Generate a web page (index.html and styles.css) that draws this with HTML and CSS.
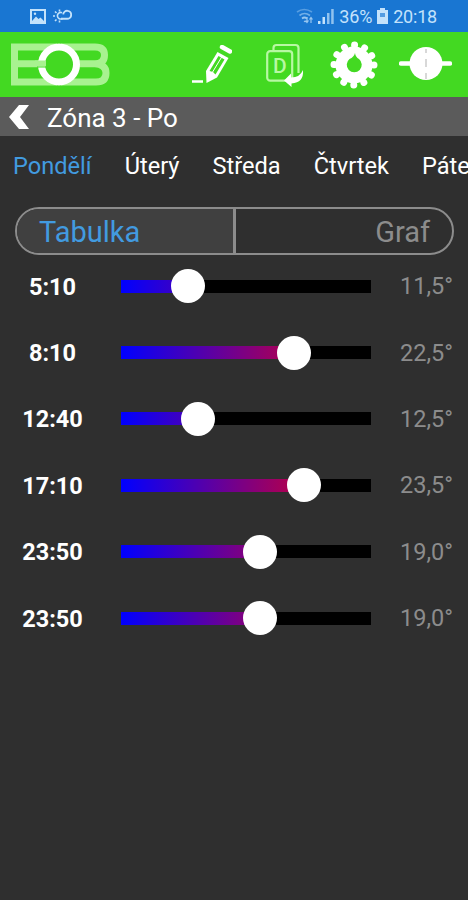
FILE: index.html
```
<!DOCTYPE html>
<html lang="cs">
<head>
    <meta charset="UTF-8">
    <meta name="viewport" content="width=device-width, initial-scale=1.0">
    <title>Zóna 3 - Po</title>
    <link rel="stylesheet" href="styles.css">
</head>
<body>
    <div class="status-bar">
        <div class="status-left">
            <svg width="16" height="15" viewBox="0 0 16 15">
                <rect x="1" y="1" width="14" height="13" fill="none" stroke="currentColor" stroke-width="2"/>
                <path d="M2 12 L6 7.500 L8.500 10 L10.500 8.500 L14 12 V13 H2 Z" fill="currentColor"/>
                <circle cx="5" cy="4.800" r="1.200" fill="currentColor"/>
            </svg>
            <svg width="19" height="15" viewBox="0 0 19 15" fill="none" stroke="currentColor" stroke-width="1.600">
                <path d="M9 3.700 A3.300 3.300 0 1 0 9.500 9.500"/>
                <path d="M0 7 H2 M2 2.500 L3.500 4 M6.500 0.500 V2.500 M2 12 L3.500 10.500 M6.500 11.500 V13.500"/>
                <path d="M8 9.800 H14 A4 4 0 1 0 10.200 5.300" stroke-width="1.900"/>
            </svg>
        </div>
        <div class="status-right">
            <svg class="wifi" width="18" height="17" viewBox="0 0 18 17" fill="none" stroke="currentColor" stroke-width="1.700">
                <path d="M1 4 Q8 -1 16 4" opacity="0.500"/>
                <path d="M3.500 7.500 Q8.500 3.500 14 7.500" opacity="0.700"/>
                <path d="M6 10.500 Q8.500 8.500 11 10.500"/>
                <path d="M8 13 L9.500 14 M11 9 V14 M9.500 12.500 L11 14.500 L12.500 12.500 M15 15 V10 M13.500 11.500 L15 9.500 L16.500 11.500" stroke-width="1.200"/>
            </svg>
            <svg class="signal" width="16" height="15" viewBox="0 0 16 15" fill="currentColor">
                <rect x="0" y="12" width="2.500" height="3"/>
                <rect x="4.500" y="8" width="2.500" height="7"/>
                <rect x="9" y="4" width="2.500" height="11" opacity="0.700"/>
                <rect x="13.200" y="0" width="2.500" height="15" opacity="0.700"/>
            </svg>
            <span class="battery-text">36%</span>
            <svg class="battery" width="11" height="16" viewBox="0 0 11 16">
                <path d="M3 0 H8 V2 H11 V16 H0 V2 H3 Z" fill="currentColor"/>
                <path d="M3 5 H8 V9 H3 Z" fill="#1976d2" opacity="0.650"/>
            </svg>
            <span class="clock">20:18</span>
        </div>
    </div>

    <header class="toolbar">
        <svg class="logo" width="99" height="46" viewBox="0 0 99 46">
            <g fill="none" stroke="#a8f290" stroke-width="7">
                <path d="M46 5 H3.500 V40 H46 M3.500 21.800 H34"/>
                <path d="M50 5 H84 Q93.500 5 93.500 13 Q93.500 21.800 84 21.800 H62 M84 21.800 Q95 22.500 95 31 Q95 40 85 40 H50"/>
            </g>
            <circle cx="48" cy="22.500" r="17.500" fill="#43d922" stroke="#fff" stroke-width="7"/>
            <path d="M24 21.500 H35" stroke="#a8f290" stroke-width="6"/>
            <path d="M26 25 H35" stroke="#43d922" stroke-width="1"/>
        </svg>
        <svg class="icon-edit" width="40" height="40" viewBox="0 0 40 40">
            <path d="M0 36.500 H11" stroke="#fff" stroke-width="2.500"/>
            <path d="M25.500 7 L36.500 13 L25 32.500 L14.500 38 L14 26 Z" fill="#fff"/>
            <path d="M26.500 11 L32.500 14.500 L23.500 29.500 L21 27 L17.500 26 Z" fill="#43d922"/>
            <path d="M30 11.500 L20 28" stroke="#fff" stroke-width="1"/>
            <path d="M30 2 L38 6.500" stroke="#fff" stroke-width="4.500" stroke-linecap="round"/>
        </svg>
        <svg class="icon-copy" width="38" height="46" viewBox="0 0 38 46">
            <g fill="none" stroke="#b8f8a3" stroke-width="2.200">
                <rect x="1.200" y="9.200" width="25" height="29.500" rx="3"/>
                <path d="M7.500 9 V6 Q7.500 3 10.500 3 H29.500 Q32.500 3 32.500 6 V31"/>
            </g>
            <text class="copy-letter" x="13.800" y="31" text-anchor="middle">D</text>
            <path d="M18 38.500 L25 31.500 V35.500 Q34 35.500 37 28 Q38 40.500 25.500 41.500 V45 Z" fill="#fff"/>
        </svg>
        <svg class="icon-gear" width="48" height="48" viewBox="-24 -24 48 48">
            <circle r="18.500" fill="#fff"/>
            <circle r="20" fill="none" stroke="#fff" stroke-width="7" stroke-linecap="round" stroke-dasharray="0.010 10.462"/>
            <path d="M1 -12 Q1.500 -8 5 -6 A7.500 7.500 0 1 1 -4.500 -6 Q0 -8 1 -12 Z" fill="#43d922"/>
        </svg>
        <svg class="icon-plug" width="53" height="36" viewBox="0 0 53 36">
            <path d="M2 16.500 H51" stroke="#fff" stroke-width="4.500" stroke-linecap="round"/>
            <circle cx="27" cy="16.500" r="16.500" fill="#fff"/>
            <path d="M27 2 V6 M27 12 V20 M27 26 V32" stroke="#ccc" stroke-width="1.500"/>
        </svg>
    </header>

    <div class="title-bar">
        <svg class="back" width="20" height="26" viewBox="0 0 20 26">
            <path d="M10 1 H20 L11 13 L20 25 H10 L0 13 Z" fill="#fff"/>
        </svg>
        <h1>Zóna 3 - Po</h1>
    </div>

    <nav class="days">
        <a class="day active">Pondělí</a>
        <a class="day">Úterý</a>
        <a class="day">Středa</a>
        <a class="day">Čtvrtek</a>
        <a class="day">Pátek</a>
    </nav>

    <div class="switch">
        <div class="switch-item selected">Tabulka</div>
        <div class="switch-item">Graf</div>
    </div>

    <div class="schedule">
        <div class="row">
            <div class="time">5:10</div>
            <div class="slider" style="--pos: 26.8%"><div class="fill"></div><div class="thumb"></div></div>
            <div class="temp">11,5°</div>
        </div>
        <div class="row">
            <div class="time">8:10</div>
            <div class="slider" style="--pos: 69%"><div class="fill"></div><div class="thumb"></div></div>
            <div class="temp">22,5°</div>
        </div>
        <div class="row">
            <div class="time">12:40</div>
            <div class="slider" style="--pos: 30.8%"><div class="fill"></div><div class="thumb"></div></div>
            <div class="temp">12,5°</div>
        </div>
        <div class="row">
            <div class="time">17:10</div>
            <div class="slider" style="--pos: 73%"><div class="fill"></div><div class="thumb"></div></div>
            <div class="temp">23,5°</div>
        </div>
        <div class="row">
            <div class="time">23:50</div>
            <div class="slider" style="--pos: 55.6%"><div class="fill"></div><div class="thumb"></div></div>
            <div class="temp">19,0°</div>
        </div>
        <div class="row">
            <div class="time">23:50</div>
            <div class="slider" style="--pos: 55.6%"><div class="fill"></div><div class="thumb"></div></div>
            <div class="temp">19,0°</div>
        </div>
    </div>
</body>
</html>
```
FILE: styles.css
```
* {
    box-sizing: border-box;
}

body {
    margin: 0;
    height: 900px;
    overflow: hidden;
    background-color: #2f2f2f;
    color: white;
    font-family: Roboto, sans-serif;
    font-size: 24px;
}

svg {
    display: block;
    flex: none;
}

/* phone status bar */
.status-bar {
    display: flex;
    justify-content: space-between;
    height: 32px;
    padding: 0 31px 0 30px;
    background-color: #1976d2;
    color: #c3e2fb;
}

.status-left, .status-right {
    display: flex;
    align-items: center;
}

.status-left {
    gap: 7px;
}

.status-right {
    font-size: 18px;
    letter-spacing: -0.2px;
}

.wifi {
    margin-right: 4px;
    opacity: 0.75;
}

.signal {
    margin-right: 5px;
}

.battery {
    margin: 0 5px 0 5px;
}

/* green toolbar */
.toolbar {
    display: flex;
    align-items: center;
    height: 65px;
    padding-left: 11px;
    background-color: #43d922;
}

.icon-edit {
    margin-left: 82px;
}

.icon-copy {
    margin-left: 34px;
}

.copy-letter {
    fill: #b8f8a3;
    font-size: 21px;
    font-weight: 500;
}

.icon-gear {
    margin-left: 26px;
}

.icon-plug {
    margin-left: 21px;
}

.title-bar {
    display: flex;
    align-items: center;
    height: 39px;
    padding-left: 9px;
    background-color: #5b5b5b;
}

.title-bar h1 {
    margin: 3px 0 0 18px;
    font-size: 26px;
    font-weight: 400;
}

.days {
    display: flex;
    gap: 33px;
    height: 60px;
    padding-left: 13px;
    font-size: 23.6px;
    line-height: 60px;
    overflow: hidden;
    white-space: nowrap;
}

.day.active {
    color: #429be0;
}

.switch {
    display: flex;
    height: 48px;
    margin: 11px 14px 0 15px;
    border: 2px solid #8c8c8c;
    border-radius: 24px;
    overflow: hidden;
    font-size: 29px;
    line-height: 47px;
}

.switch-item {
    flex: 1;
    padding: 0 22px;
    text-align: right;
    color: #8c8c8c;
}

.switch-item.selected {
    border-right: 3px solid #8c8c8c;
    background-color: #404040;
    color: #429be0;
    text-align: left;
}

.schedule {
    margin-top: -2px;
}

.row {
    display: flex;
    align-items: center;
    height: 66.4px;
    padding-right: 15px;
}

.time {
    width: 105px;
    margin-right: 16px;
    padding-top: 1px;
    text-align: center;
    font-size: 23.5px;
    font-weight: 700;
}

.slider {
    position: relative;
    width: 250px;
    height: 13px;
    background-color: black;
}

.fill {
    width: var(--pos);
    height: 100%;
    background: linear-gradient(to right, #0000ff, #ff0000) no-repeat;
    background-size: 250px 100%;
}

.thumb {
    position: absolute;
    top: 50%;
    left: var(--pos);
    width: 34px;
    height: 34px;
    border-radius: 50%;
    background-color: white;
    transform: translate(-50%, -50%);
}

.temp {
    flex: 1;
    text-align: right;
    font-size: 23.5px;
    color: #8c8c8c;
}
```
